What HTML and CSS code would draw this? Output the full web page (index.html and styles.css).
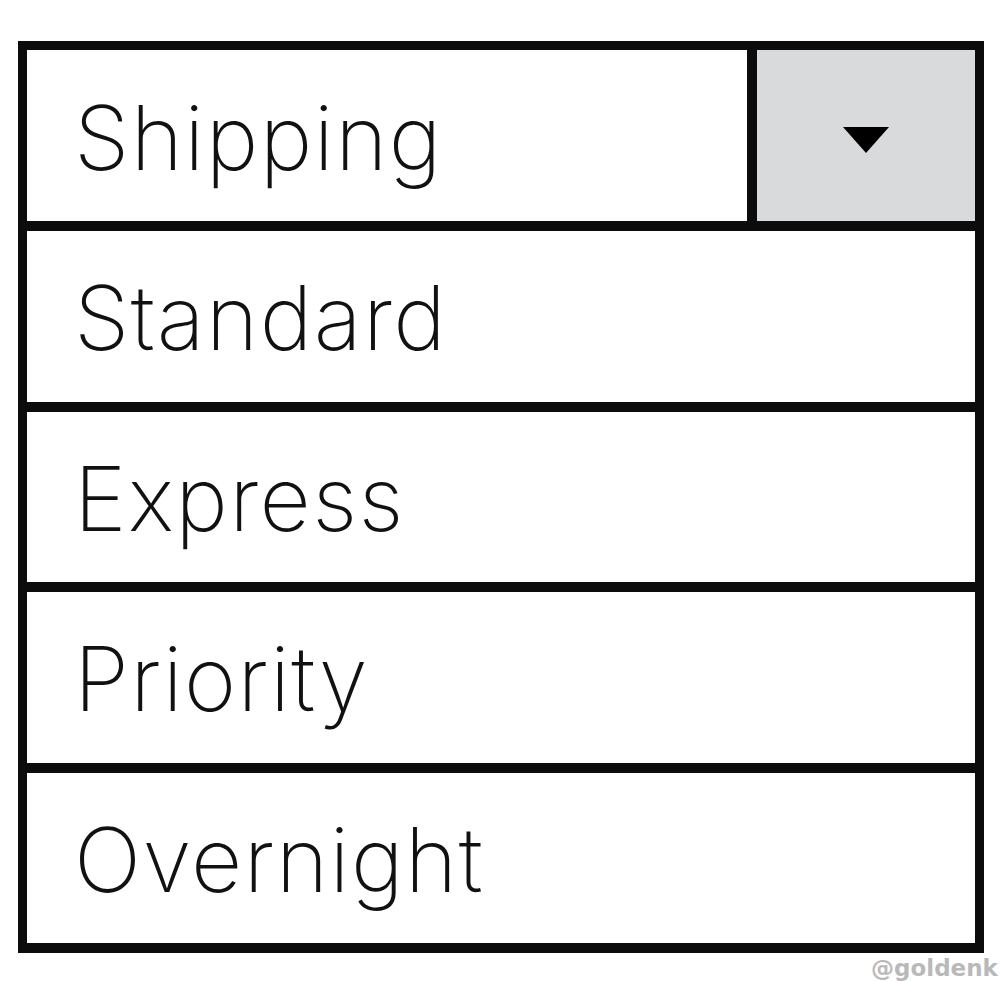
FILE: index.html
```html
<!DOCTYPE html>
<html>
<head>
    <title>Shipping</title>
    <link rel="stylesheet" href="styles.css">
</head>
<body>
    <div class="select">
        <div class="select-head">
            <div class="select-value">Shipping</div>
            <div class="select-toggle">
                <svg width="46" height="26" viewBox="0 0 46 26"><polygon points="0,0 46,0 23,26" fill="#000"/></svg>
            </div>
        </div>
        <div class="option">Standard</div>
        <div class="option">Express</div>
        <div class="option">Priority</div>
        <div class="option">Overnight</div>
    </div>
    <div class="credit">@goldenk</div>
</body>
</html>
```

FILE: styles.css
```css
html, body {
    margin: 0;
    padding: 0;
    background-color: #fff;
    overflow: hidden;
}
body {
    height: 981px;
    font-family: Inter, Lato, sans-serif;
    color: #111;
}
.select {
    margin: 41px 0 0 18px;
    width: 966px;
    box-sizing: border-box;
    border: 9px solid #0c0c0c;
    border-bottom-width: 10px;
}
.select-head {
    display: flex;
    height: 171px;
    border-bottom: 10px solid #0c0c0c;
}
.select-value,
.option {
    display: flex;
    align-items: center;
    padding-left: 47px;
    padding-top: 3px;
    font-size: 89px;
    font-weight: 200;
    letter-spacing: 1.4px;
    line-height: 1;
}
.select-value {
    flex: 1;
}
.select-toggle {
    width: 228px;
    border-left: 10px solid #0c0c0c;
    background-color: #d9dadb;
    display: flex;
    justify-content: center;
    align-items: center;
    padding-top: 8px;
    box-sizing: border-box;
}
.option {
    box-sizing: border-box;
    border-bottom: 10px solid #0c0c0c;
    height: 180.5px;
}
.option:last-child {
    border-bottom: none;
    height: 170.5px;
}
.credit {
    margin: 2px 0 0 871px;
    white-space: nowrap;
    font-family: "DejaVu Sans", sans-serif;
    font-weight: bold;
    font-size: 23px;
    color: #b9b9b9;
}
```
